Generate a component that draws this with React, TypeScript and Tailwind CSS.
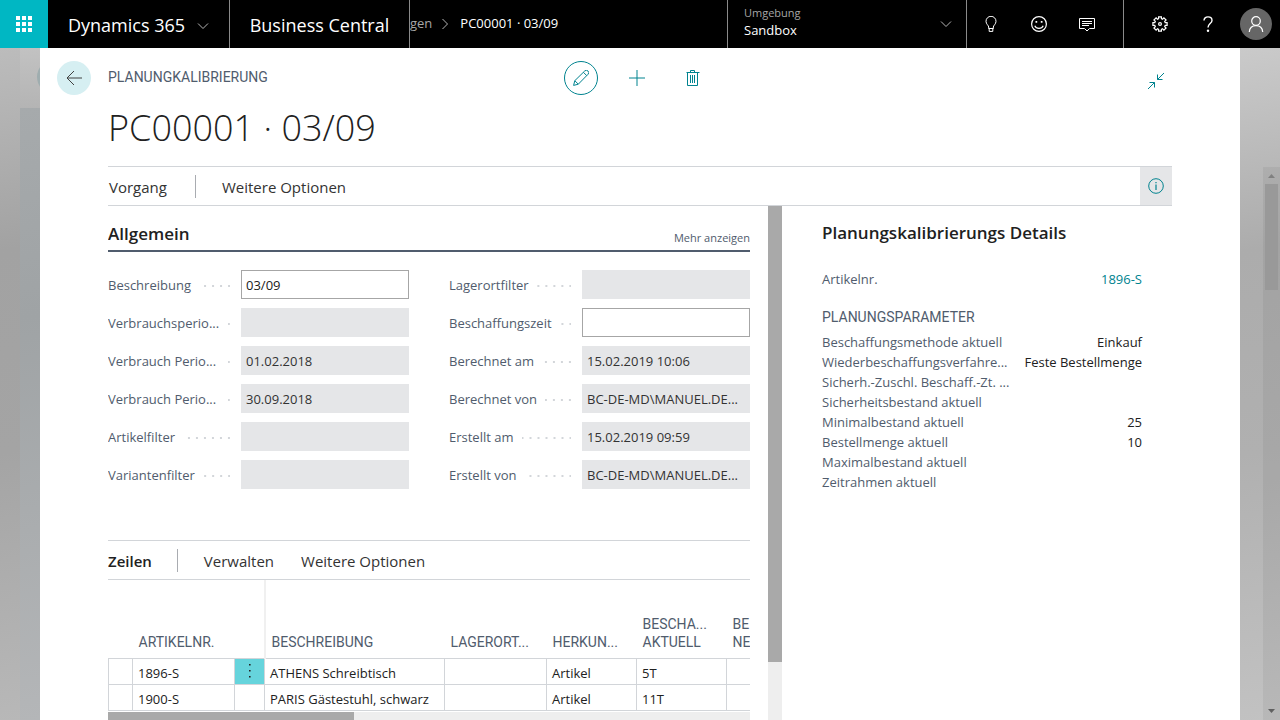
import type { ReactNode } from "react";

type FieldData = { id: string; label: string; value: string; editable?: boolean };

const leftFields: FieldData[] = [
  { id: "description", label: "Beschreibung", value: "03/09", editable: true },
  { id: "period", label: "Verbrauchsperio...", value: "" },
  { id: "period-start", label: "Verbrauch Perio...", value: "01.02.2018" },
  { id: "period-end", label: "Verbrauch Perio...", value: "30.09.2018" },
  { id: "item-filter", label: "Artikelfilter", value: "" },
  { id: "variant-filter", label: "Variantenfilter", value: "" },
];

const rightFields: FieldData[] = [
  { id: "location-filter", label: "Lagerortfilter", value: "" },
  { id: "lead-time", label: "Beschaffungszeit", value: "", editable: true },
  { id: "calculated-at", label: "Berechnet am", value: "15.02.2019 10:06" },
  { id: "calculated-by", label: "Berechnet von", value: "BC-DE-MD\\MANUEL.DE..." },
  { id: "created-at", label: "Erstellt am", value: "15.02.2019 09:59" },
  { id: "created-by", label: "Erstellt von", value: "BC-DE-MD\\MANUEL.DE..." },
];

const parameters = [
  { label: "Beschaffungsmethode aktuell", value: "Einkauf" },
  { label: "Wiederbeschaffungsverfahre...", value: "Feste Bestellmenge" },
  { label: "Sicherh.-Zuschl. Beschaff.-Zt. ...", value: "" },
  { label: "Sicherheitsbestand aktuell", value: "" },
  { label: "Minimalbestand aktuell", value: "25" },
  { label: "Bestellmenge aktuell", value: "10" },
  { label: "Maximalbestand aktuell", value: "" },
  { label: "Zeitrahmen aktuell", value: "" },
];

const rows = [
  { no: "1896-S", description: "ATHENS Schreibtisch", origin: "Artikel", leadTime: "5T", active: true },
  { no: "1900-S", description: "PARIS Gästestuhl, schwarz", origin: "Artikel", leadTime: "11T", active: false },
];

function Icon({ children, className = "size-4" }: { children: ReactNode; className?: string }) {
  return (
    <svg viewBox="0 0 16 16" fill="none" stroke="currentColor" className={className} aria-hidden="true">
      {children}
    </svg>
  );
}

function Chevron({ className }: { className: string }) {
  return (
    <svg viewBox="0 0 12 8" fill="none" stroke="currentColor" className={className} aria-hidden="true">
      <path d="M1 1.5l5 5 5-5" />
    </svg>
  );
}

function HeaderButton({ label, children }: { label: string; children: ReactNode }) {
  return (
    <button type="button" aria-label={label} className="flex h-full w-12 items-center justify-center">
      {children}
    </button>
  );
}

function TopBar() {
  return (
    <header className="flex h-12 shrink-0 bg-black text-white">
      <button type="button" aria-label="Apps" className="flex w-12 items-center justify-center bg-[#00b7c3]">
        <svg viewBox="0 0 16 16" fill="white" className="size-4" aria-hidden="true">
          <path d="M0 0h4v4H0zM6 0h4v4H6zM12 0h4v4h-4zM0 6h4v4H0zM6 6h4v4H6zM12 6h4v4h-4zM0 12h4v4H0zM6 12h4v4H6zM12 12h4v4h-4z" />
        </svg>
      </button>
      <button type="button" className="flex w-[182px] items-center justify-between border-r border-[#8a8a8a] pt-0.5 pr-5 pl-5 text-lg">
        <span className="whitespace-nowrap">Dynamics 365</span>
        <Chevron className="mt-0.5 h-2 w-3 text-[#b5b5b5]" />
      </button>
      <a href="#home" className="flex w-[180px] items-center justify-center border-r border-[#8a8a8a] pt-0.5 text-lg whitespace-nowrap">
        Business Central
      </a>
      <nav aria-label="Pfad" className="flex min-w-0 flex-1 items-center text-[13px]">
        <a href="#list" className="text-[#a6a6a6]">gen</a>
        <svg viewBox="0 0 8 12" fill="none" stroke="currentColor" className="mr-[11px] ml-[9px] h-3 w-2 text-[#b5b5b5]" aria-hidden="true">
          <path d="M1.500 1l5 5-5 5" />
        </svg>
        <span className="whitespace-nowrap">PC00001 · 03/09</span>
      </nav>
      <button type="button" className="flex w-60 items-center justify-between border-x border-[#8a8a8a] pr-3.5 pl-4 text-left">
        <span className="pb-1">
          <span className="block text-[11px] leading-4 text-[#a6a6a6]">Umgebung</span>
          <span className="block text-[13px] leading-[18px]">Sandbox</span>
        </span>
        <Chevron className="h-2 w-3 text-[#b5b5b5]" />
      </button>
      <div className="flex w-[157px] border-r border-[#8a8a8a]">
        <HeaderButton label="Tipps">
          <Icon>
            <path d="M5.700 12.500v-1.500c0-1.500-2.700-2.800-2.700-5.700a5 5 0 0 1 10 0c0 2.900-2.700 4.200-2.700 5.700v1.500zM5.700 12.500h4.600M6.200 15.400h3.600v-2.700" />
            <path d="M6.200 12.500v2.900" />
          </Icon>
        </HeaderButton>
        <HeaderButton label="Feedback">
          <Icon>
            <circle cx="8" cy="8" r="7.400" strokeWidth="1.200" />
            <path d="M3.800 9.800c1.400 3.400 7 3.400 8.400 0" strokeWidth="1.200" />
            <path d="M4.500 5h1.700v1.700H4.500zM9.800 5h1.700v1.700H9.800z" fill="currentColor" stroke="none" />
          </Icon>
        </HeaderButton>
        <HeaderButton label="Nachrichten">
          <Icon>
            <path d="M.5 2.500h15v10h-5L8 15l-2.500-2.500h-5zM3 5.500h10M3 7.500h10M3 9.500h7" />
          </Icon>
        </HeaderButton>
      </div>
      <div className="flex justify-end pl-3">
        <HeaderButton label="Einstellungen">
          <Icon>
            <path
              strokeWidth="1.200"
              d="M6.600 2.700V.8h2.800v1.900l1.100.5 1.400-1.400 2.200 2.200-1.400 1.400.5 1.200h1.900v2.800h-1.900l-.5 1.200 1.400 1.400-2.200 2.200-1.400-1.400-1.100.5v1.900H6.600v-1.900l-1.100-.5-1.400 1.400L1.900 12l1.400-1.400-.5-1.200H.9V6.600h1.900l.5-1.200L1.900 4l2.200-2.200 1.400 1.400z"
            />
            <circle cx="8" cy="8" r="1.400" strokeWidth="1.200" />
          </Icon>
        </HeaderButton>
        <HeaderButton label="Hilfe">
          <Icon>
            <path strokeWidth="1.400" d="M4 4.500C4 2.300 5.600.9 8 .9s4 1.400 4 3.500c0 3-4 3.500-4 7.100" />
            <circle cx="8" cy="14.700" r="1.200" fill="currentColor" stroke="none" />
          </Icon>
        </HeaderButton>
        <HeaderButton label="Konto">
          <span className="flex size-8 shrink-0 items-center justify-center rounded-full bg-[#666]">
            <Icon>
              <circle cx="8" cy="5" r="4.300" strokeWidth="1.200" />
              <path d="M1.300 16c.3-4 3-6.300 6.700-6.300s6.400 2.300 6.700 6.300" strokeWidth="1.200" />
            </Icon>
          </span>
        </HeaderButton>
      </div>
    </header>
  );
}

function Field({ field }: { field: FieldData }) {
  return (
    <div className="flex h-[29px] items-center">
      <label htmlFor={field.id} className="flex w-[133px] shrink-0 items-center gap-2 pt-0.5 pr-[11px] text-[#505c6d]">
        <span className="whitespace-nowrap">{field.label}</span>
        <span className="h-0.5 flex-1 bg-[linear-gradient(to_left,#d3d6da_2px,transparent_2px)] bg-[length:8px_2px] bg-right bg-repeat-x" />
      </label>
      <input
        id={field.id}
        readOnly={!field.editable}
        defaultValue={field.value}
        className={
          field.editable
            ? "h-full w-full min-w-0 border border-[#a6a6a6] bg-white px-1 text-[#212121]"
            : "h-full w-full min-w-0 border border-[#e5e6e8] bg-[#e5e6e8] px-1 text-[#333]"
        }
      />
    </div>
  );
}

function HeadCell({ lines }: { lines: string[] }) {
  return (
    <th scope="col" className="overflow-hidden px-1.5 pb-[7px] text-left align-bottom font-normal">
      {lines.map((line) => (
        <span key={line} className="block whitespace-nowrap">{line}</span>
      ))}
    </th>
  );
}

function Lines() {
  return (
    <section className="mt-[51px]">
      <div className="flex h-10 items-center border-y border-[#d2d5d9] text-[15px] text-[#333]">
        <h2 className="pt-0.5 font-semibold text-[#212121]">Zeilen</h2>
        <span className="mr-[26px] ml-[25px] h-[23px] w-px bg-[#a9acb1]" />
        <button type="button" className="mr-[27px] pt-0.5">Verwalten</button>
        <button type="button" className="pt-0.5">Weitere Optionen</button>
      </div>
      <div className="overflow-hidden">
        <table className="w-[708px] table-fixed border-collapse text-[13px] text-[#212121]">
          <colgroup>
            <col className="w-6" />
            <col className="w-[102px]" />
            <col className="w-[30px]" />
            <col className="w-[180px]" />
            <col className="w-[102px]" />
            <col className="w-[90px]" />
            <col className="w-[90px]" />
            <col className="w-[90px]" />
          </colgroup>
          <thead className="font-['Roboto','Open_Sans',sans-serif] text-sm leading-[18px] text-[#505c6d]">
            <tr className="h-[78px]">
              <td />
              <HeadCell lines={["ARTIKELNR."]} />
              <td className="border-r-2 border-[#f0f0f0]" />
              <HeadCell lines={["BESCHREIBUNG"]} />
              <HeadCell lines={["LAGERORT..."]} />
              <HeadCell lines={["HERKUN..."]} />
              <HeadCell lines={["BESCHA...", "AKTUELL"]} />
              <HeadCell lines={["BE", "NE"]} />
            </tr>
          </thead>
          <tbody>
            {rows.map((row) => (
              <tr key={row.no} className="h-[26px] leading-[19px] [&>td]:border [&>td]:border-[#d2d5d9] [&>td]:px-[5px] [&>td]:pt-1 [&>td]:whitespace-nowrap">
                <td />
                <td>{row.no}</td>
                <td className={row.active ? "bg-[#66d4dc]" : ""}>
                  {row.active && (
                    <button type="button" aria-label="Zeilenaktionen" className="flex w-full justify-center pb-1">
                      <svg viewBox="0 0 2 14" className="h-3.5 w-0.5" fill="currentColor" aria-hidden="true">
                        <path d="M0 0h1.600v1.600H0zM0 6h1.600v1.600H0zM0 12h1.600v1.600H0z" />
                      </svg>
                    </button>
                  )}
                </td>
                <td>{row.description}</td>
                <td />
                <td>{row.origin}</td>
                <td>{row.leadTime}</td>
                <td />
              </tr>
            ))}
          </tbody>
        </table>
      </div>
      <div className="mt-px h-3.5 bg-[#eee]">
        <div className="h-full w-[246px] bg-[#a9a9a9]" />
      </div>
    </section>
  );
}

function Details() {
  return (
    <aside className="w-[390px] shrink-0 pr-[30px] pl-10 text-[13px] text-[#505c6d]">
      <h2 className="pt-[15px] text-[17px] leading-6 font-semibold text-[#212121]">Planungskalibrierungs Details</h2>
      <dl className="mt-6 flex justify-between leading-5">
        <dt>Artikelnr.</dt>
        <dd>
          <a href="#item" className="text-[#00838f]">1896-S</a>
        </dd>
      </dl>
      <h3 className="mt-[18px] font-['Roboto','Open_Sans',sans-serif] text-sm leading-5">PLANUNGSPARAMETER</h3>
      <dl className="mt-[5px] leading-5">
        {parameters.map((item) => (
          <div key={item.label} className="flex h-5 justify-between whitespace-nowrap">
            <dt>{item.label}</dt>
            <dd className="text-[#212121]">{item.value}</dd>
          </div>
        ))}
      </dl>
    </aside>
  );
}

function CardHeader() {
  return (
    <div className="flex shrink-0 pt-[13px]">
      <div className="w-[68px] shrink-0 pl-[17px]">
        <button type="button" aria-label="Zurück" className="flex size-[34px] items-center justify-center rounded-full bg-[#d6eff2] text-[#404040]">
          <Icon>
            <path d="M16 8H1M8 1L1 8l7 7" />
          </Icon>
        </button>
      </div>
      <div className="min-w-0 flex-1 pr-[68px]">
        <div className="grid h-[34px] grid-cols-[1fr_auto_1fr] items-center">
          <p className="pb-0.5 font-['Roboto','Open_Sans',sans-serif] text-sm text-[#505c6d]">PLANUNGKALIBRIERUNG</p>
          <div className="mr-1.5 flex items-center gap-[22px] text-[#00838f]">
            <button type="button" aria-label="Bearbeiten" className="flex size-[34px] items-center justify-center rounded-full border border-[#00838f]">
              <Icon>
                <path d="M.6 15.400l1.200-4.700L11.700 1a2.300 2.300 0 0 1 3.300 3.300L5.300 14.200zM1.800 10.700l3.500 3.500M10.400 2.300l3.300 3.300" />
              </Icon>
            </button>
            <button type="button" aria-label="Neu" className="flex size-[34px] items-center justify-center">
              <Icon>
                <path d="M8 0v16M0 8h16" />
              </Icon>
            </button>
            <button type="button" aria-label="Löschen" className="flex size-[34px] items-center justify-center">
              <Icon>
                <path d="M1.500 2.500h13M5.500 2.500v-2h4v2M2.500 2.500v13h10v-13M5.500 5v8M7.500 5v8M9.500 5v8" />
              </Icon>
            </button>
          </div>
          <button type="button" aria-label="Verkleinern" className="mt-1.5 mr-2 justify-self-end text-[#00838f]">
            <Icon>
              <path d="M0 16l6.500-6.500M1.500 9.500h5v5M16 0L9.500 6.500M9.500 1.500v5h5" />
            </Icon>
          </button>
        </div>
        <h1 className="mt-1.5 h-[65px] text-4xl leading-[54px] font-light text-[#212121]">PC00001 · 03/09</h1>
        <div className="flex h-10 items-center border-y border-[#d2d5d9] text-[15px] text-[#333]">
          <button type="button" className="pt-0.5 pl-px">Vorgang</button>
          <span className="mr-[26px] ml-7 h-[23px] w-px bg-[#a9acb1]" />
          <button type="button" className="pt-0.5">Weitere Optionen</button>
          <button type="button" aria-label="Infobox" className="ml-auto flex h-full w-8 items-center justify-center bg-[#e5e6e8] text-[#00838f]">
            <Icon>
              <circle cx="8" cy="8" r="7.300" />
              <path d="M8 6.500V12M8 4v1.300" strokeWidth="1.200" />
            </Icon>
          </button>
        </div>
      </div>
    </div>
  );
}

export default function App() {
  return (
    <div className="flex h-screen min-h-0 flex-col overflow-hidden font-['Open_Sans','Noto_Sans',sans-serif] text-[13px]">
      <TopBar />
      <div className="flex min-h-0 flex-1">
        <div className="flex w-10 shrink-0">
          <div className="w-5 bg-[linear-gradient(170deg,#bcbcbc,#a2a2a2_30%,#a4a4a4_60%,#b8b8b8)]" />
          <div className="flex w-5 flex-col overflow-hidden bg-[linear-gradient(170deg,#a8acae,#9fa3a5_40%,#b4b6b8)]">
            <div className="h-[60px] bg-linear-to-b from-[#c2c2c2] to-[#b4b4b4] pt-3 pl-[17px]">
              <div className="size-[34px] rounded-full bg-[#9fadaf]" />
            </div>
          </div>
        </div>
        <main className="flex min-w-0 flex-1 flex-col bg-white">
          <CardHeader />
          <div className="flex min-h-0 flex-1 pr-[68px] pl-[68px]">
            <div className="min-w-0 flex-1 overflow-hidden pr-[18px]">
              <section>
                <div className="flex h-[46px] items-end justify-between border-b-2 border-[#505c6d] pb-1">
                  <h2 className="text-[17px] leading-6 font-semibold text-[#212121]">Allgemein</h2>
                  <button type="button" className="text-[11px] leading-4 text-[#505c6d]">Mehr anzeigen</button>
                </div>
                <div className="grid grid-cols-2 gap-x-10 pt-[18px]">
                  <div className="flex flex-col gap-[9px]">
                    {leftFields.map((field) => <Field key={field.id} field={field} />)}
                  </div>
                  <div className="flex flex-col gap-[9px]">
                    {rightFields.map((field) => <Field key={field.id} field={field} />)}
                  </div>
                </div>
              </section>
              <Lines />
            </div>
            <div className="w-3.5 shrink-0 bg-[#eee]">
              <div className="h-[456px] bg-[#a9a9a9]" />
            </div>
            <Details />
          </div>
        </main>
        <div className="flex w-10 shrink-0 justify-end bg-[linear-gradient(170deg,#cacaca,#acacac_30%,#b0b0b0_60%,#c2c2c2)]">
          <div className="mt-[119px] flex w-[17px] flex-col items-center bg-black/5">
            <svg viewBox="0 0 7 4" className="mt-[7px] h-1 w-[7px] shrink-0" fill="#808080" aria-hidden="true">
              <path d="M0 4L3.500 0 7 4z" />
            </svg>
            <div className="mt-1.5 h-[106px] w-[13px] shrink-0 bg-[#999]" />
            <svg viewBox="0 0 7 4" className="mt-auto mb-[7px] h-1 w-[7px] shrink-0" fill="#606060" aria-hidden="true">
              <path d="M0 0l3.500 4L7 0z" />
            </svg>
          </div>
        </div>
      </div>
    </div>
  );
}
